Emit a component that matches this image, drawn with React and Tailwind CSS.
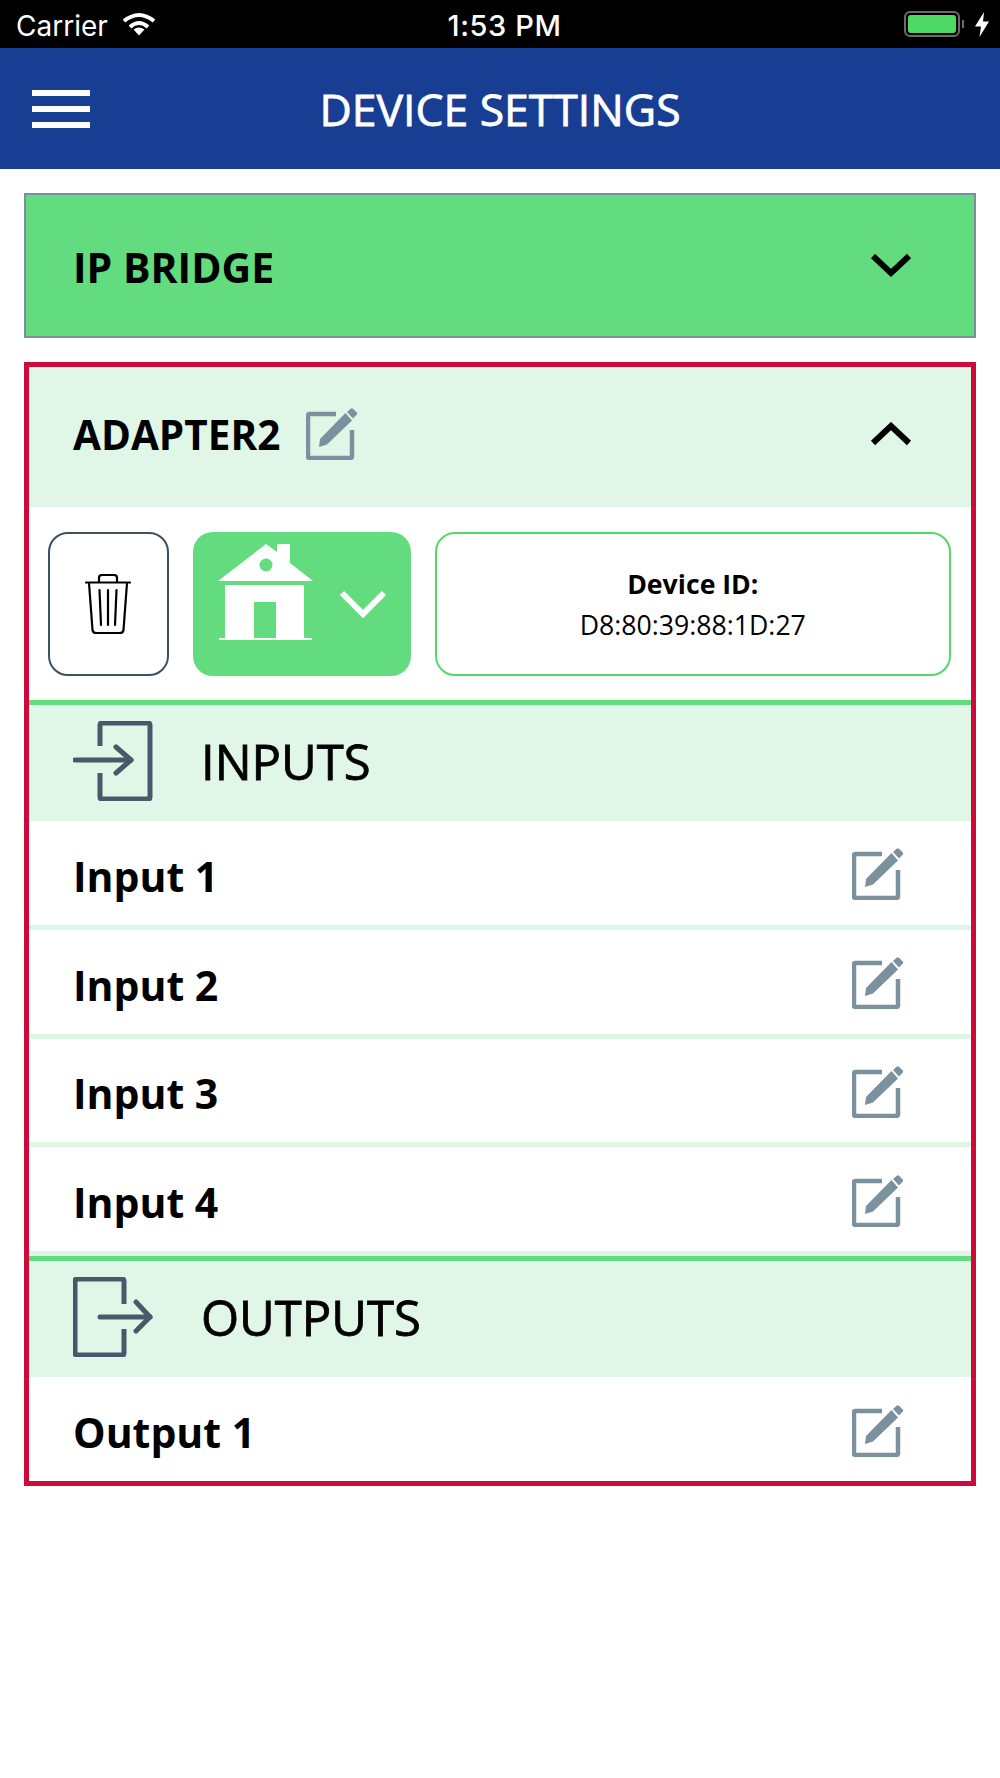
import React from "react";

function EditIcon({ className = "" }) {
  return (
    <svg className={className} width="52" height="52" viewBox="0 0 52 52" fill="none">
      <path d="M30 6H3.500A1.500 1.500 0 0 0 2 7.500V48.500A1.500 1.500 0 0 0 3.500 50H44.500A1.500 1.500 0 0 0 46 48.500V22" stroke="#7b919d" strokeWidth="4.500" />
      <path d="M14 31L39.500 5L46 12.500L21 36.500L13 39Z" fill="#7b919d" />
      <path d="M41 4L45 0.600Q46 0 47 0.800L50.800 4.500Q51.500 5.500 50.800 6.500L47 10.500Z" fill="#7b919d" />
    </svg>
  );
}

function Chevron({ up = false, className = "" }) {
  return (
    <svg className={className} width="42" height="24" viewBox="0 0 42 24" fill="none">
      <path d={up ? "M3 21L21 4L39 21" : "M3 3L21 20L39 3"} stroke="#000" strokeWidth="6" />
    </svg>
  );
}

function InputIcon() {
  return (
    <svg width="80" height="80" viewBox="0 0 80 80" fill="none" stroke="#465a69" strokeWidth="5" strokeLinecap="round" strokeLinejoin="round">
      <path d="M27 25V4Q27 2 29 2H75Q77 2 77 4V76Q77 78 75 78H29Q27 78 27 76V52" strokeLinecap="butt" />
      <path d="M2 39H58" />
      <path d="M43 26L58 39L43 52" />
    </svg>
  );
}

function OutputIcon() {
  return (
    <svg width="80" height="80" viewBox="0 0 80 80" fill="none" stroke="#465a69" strokeWidth="5" strokeLinecap="round" strokeLinejoin="round">
      <path d="M51 27V4Q51 2 49 2H4Q2 2 2 4V76Q2 78 4 78H49Q51 78 51 76V52" strokeLinecap="butt" />
      <path d="M27 40H77" />
      <path d="M63 25L77 40L63 54" />
    </svg>
  );
}

function Row({ label, last = false }) {
  return (
    <div className={`flex items-center justify-between pl-11 pr-[67px] ${last ? "h-[104px]" : "h-[108.750px] border-b-[5px] border-[#def6e3]"}`}>
      <span className="text-[41px] font-bold text-black leading-none pt-[7px]">{label}</span>
      <EditIcon className="mt-[3px]" />
    </div>
  );
}

function SectionHeader({ icon, label }) {
  return (
    <div className="h-[121px] border-t-[5px] border-[#62dc7f] bg-[#e0f6e6] flex items-center pl-11">
      <div className="mb-1">{icon}</div>
      <span className="ml-12 text-[49px] text-black leading-none mb-1 [-webkit-text-stroke:0.8px_#000]">{label}</span>
    </div>
  );
}

export default function App() {
  return (
    <div className="w-[1000px] h-[1778px] bg-white flex flex-col" style={{ fontFamily: '"Open Sans", sans-serif' }}>
      {/* status bar */}
      <div className="h-12 bg-black flex items-center justify-between pl-4 pr-[11px] text-white text-[28px]" style={{ fontFamily: 'Inter, sans-serif' }}>
        <div className="flex items-center w-[304px] pt-[3px]">
          <span>Carrier</span>
          <svg className="ml-[14px] mt-[-3px]" width="34" height="24" viewBox="0 0 34 24" fill="none" stroke="#fff" strokeWidth="4">
            <path d="M2 9Q17 -3 32 9" />
            <path d="M8 15Q17 7 26 15" />
            <path d="M17 23.500L11.500 17.500Q17 13.500 22.500 17.500Z" fill="#fff" stroke="none" />
          </svg>
        </div>
        <span className="pt-[3px] text-[29px] tracking-[0.6px] font-medium">1:53 PM</span>
        <div className="flex items-center justify-end w-[300px]">
          <div className="w-[56px] h-[26px] border-2 border-[#6b6b6b] rounded-[6px] p-[2px]">
            <div className="w-full h-full bg-[#4cd964] rounded-[3px]" />
          </div>
          <div className="w-[2px] h-[8px] ml-[2px] bg-[#6b6b6b]" />
          <svg className="ml-[11px]" width="14" height="25" viewBox="0 0 14 25" fill="#fff">
            <path d="M9 0L0 14.500H6L4.500 25L14 9.500H8Z" />
          </svg>
        </div>
      </div>

      {/* title bar */}
      <div className="h-[121px] bg-[#183e93] flex items-center">
        <div className="ml-8 w-[58px] flex flex-col gap-[10px] shrink-0">
          <div className="h-[6px] bg-white" />
          <div className="h-[6px] bg-white" />
          <div className="h-[6px] bg-white" />
        </div>
        <div className="flex-1 text-center text-white text-[44.500px] leading-none mr-[90px] pt-[2px] [-webkit-text-stroke:0.8px_#fff]">DEVICE SETTINGS</div>
      </div>

      <div className="px-6 pt-6 flex flex-col gap-6">
        {/* IP bridge */}
        <div className="h-[145px] bg-[#62dc7f] border-2 border-[#7b8f9b] flex items-center justify-between pl-[47px] pr-[62px]">
          <span className="text-[41px] font-bold text-black leading-none pt-[3px]">IP BRIDGE</span>
          <Chevron className="mt-[-1px]" />
        </div>

        {/* Adapter */}
        <div className="h-[1124px] border-[5px] border-[#cd0a3a] flex flex-col">
          <div className="h-[140px] bg-[#e0f6e6] flex items-center justify-between pl-11 pr-[59px]">
            <div className="flex items-center">
              <span className="text-[40.500px] font-bold text-black leading-none mb-[4px]">ADAPTER2</span>
              <EditIcon className="ml-[26px] mb-[6px]" />
            </div>
            <Chevron up className="mb-[6px]" />
          </div>

          <div className="h-[193px] pt-[25px] pl-[19px] pr-5 flex gap-6">
            <div className="w-[121px] h-[144px] border-2 border-[#3f5060] rounded-[20px] flex items-center justify-center">
              <svg width="46" height="60" viewBox="0 0 46 60" fill="none" stroke="#000" strokeWidth="2.200" strokeLinecap="round" strokeLinejoin="round">
                <path d="M1 8.500H45" />
                <path d="M14 8V4Q14 1 17 1H29Q32 1 32 4V8" />
                <path d="M4 9L7.500 56Q8 59 11 59H35Q38 59 38.500 56L42 9" />
                <path d="M14.500 16L16 51" />
                <path d="M23 16V51" />
                <path d="M31.500 16L30 51" />
              </svg>
            </div>
            <div className="w-[218px] h-[144px] bg-[#62dc7f] rounded-[20px] pl-[25px] pt-3 flex items-start">
              <svg width="96" height="97" viewBox="0 0 96 97" fill="#fff">
                <path d="M0 37L48 0L59 8V0H72V19L95 37Z" />
                <circle cx="48" cy="21" r="6.500" fill="#62dc7f" />
                <path d="M7 41H86V94H58V58H36V94H7Z" />
                <rect x="1" y="94" width="93" height="2" />
              </svg>
              <svg className="ml-[25px] mt-[46px]" width="48" height="28" viewBox="0 0 48 28" fill="none" stroke="#fff" strokeWidth="6">
                <path d="M3 3L24 24L45 3" />
              </svg>
            </div>
            <div className="w-[517px] h-[144px] border-2 border-[#53d86a] rounded-[20px] flex flex-col items-center justify-center text-[26.670px] text-black leading-[41px]">
              <span className="font-bold">Device ID:</span>
              <span>D8:80:39:88:1D:27</span>
            </div>
          </div>

          <SectionHeader icon={<InputIcon />} label="INPUTS" />
          <Row label="Input 1" />
          <Row label="Input 2" />
          <Row label="Input 3" />
          <Row label="Input 4" />
          <SectionHeader icon={<OutputIcon />} label="OUTPUTS" />
          <Row label="Output 1" last />
        </div>
      </div>
    </div>
  );
}
